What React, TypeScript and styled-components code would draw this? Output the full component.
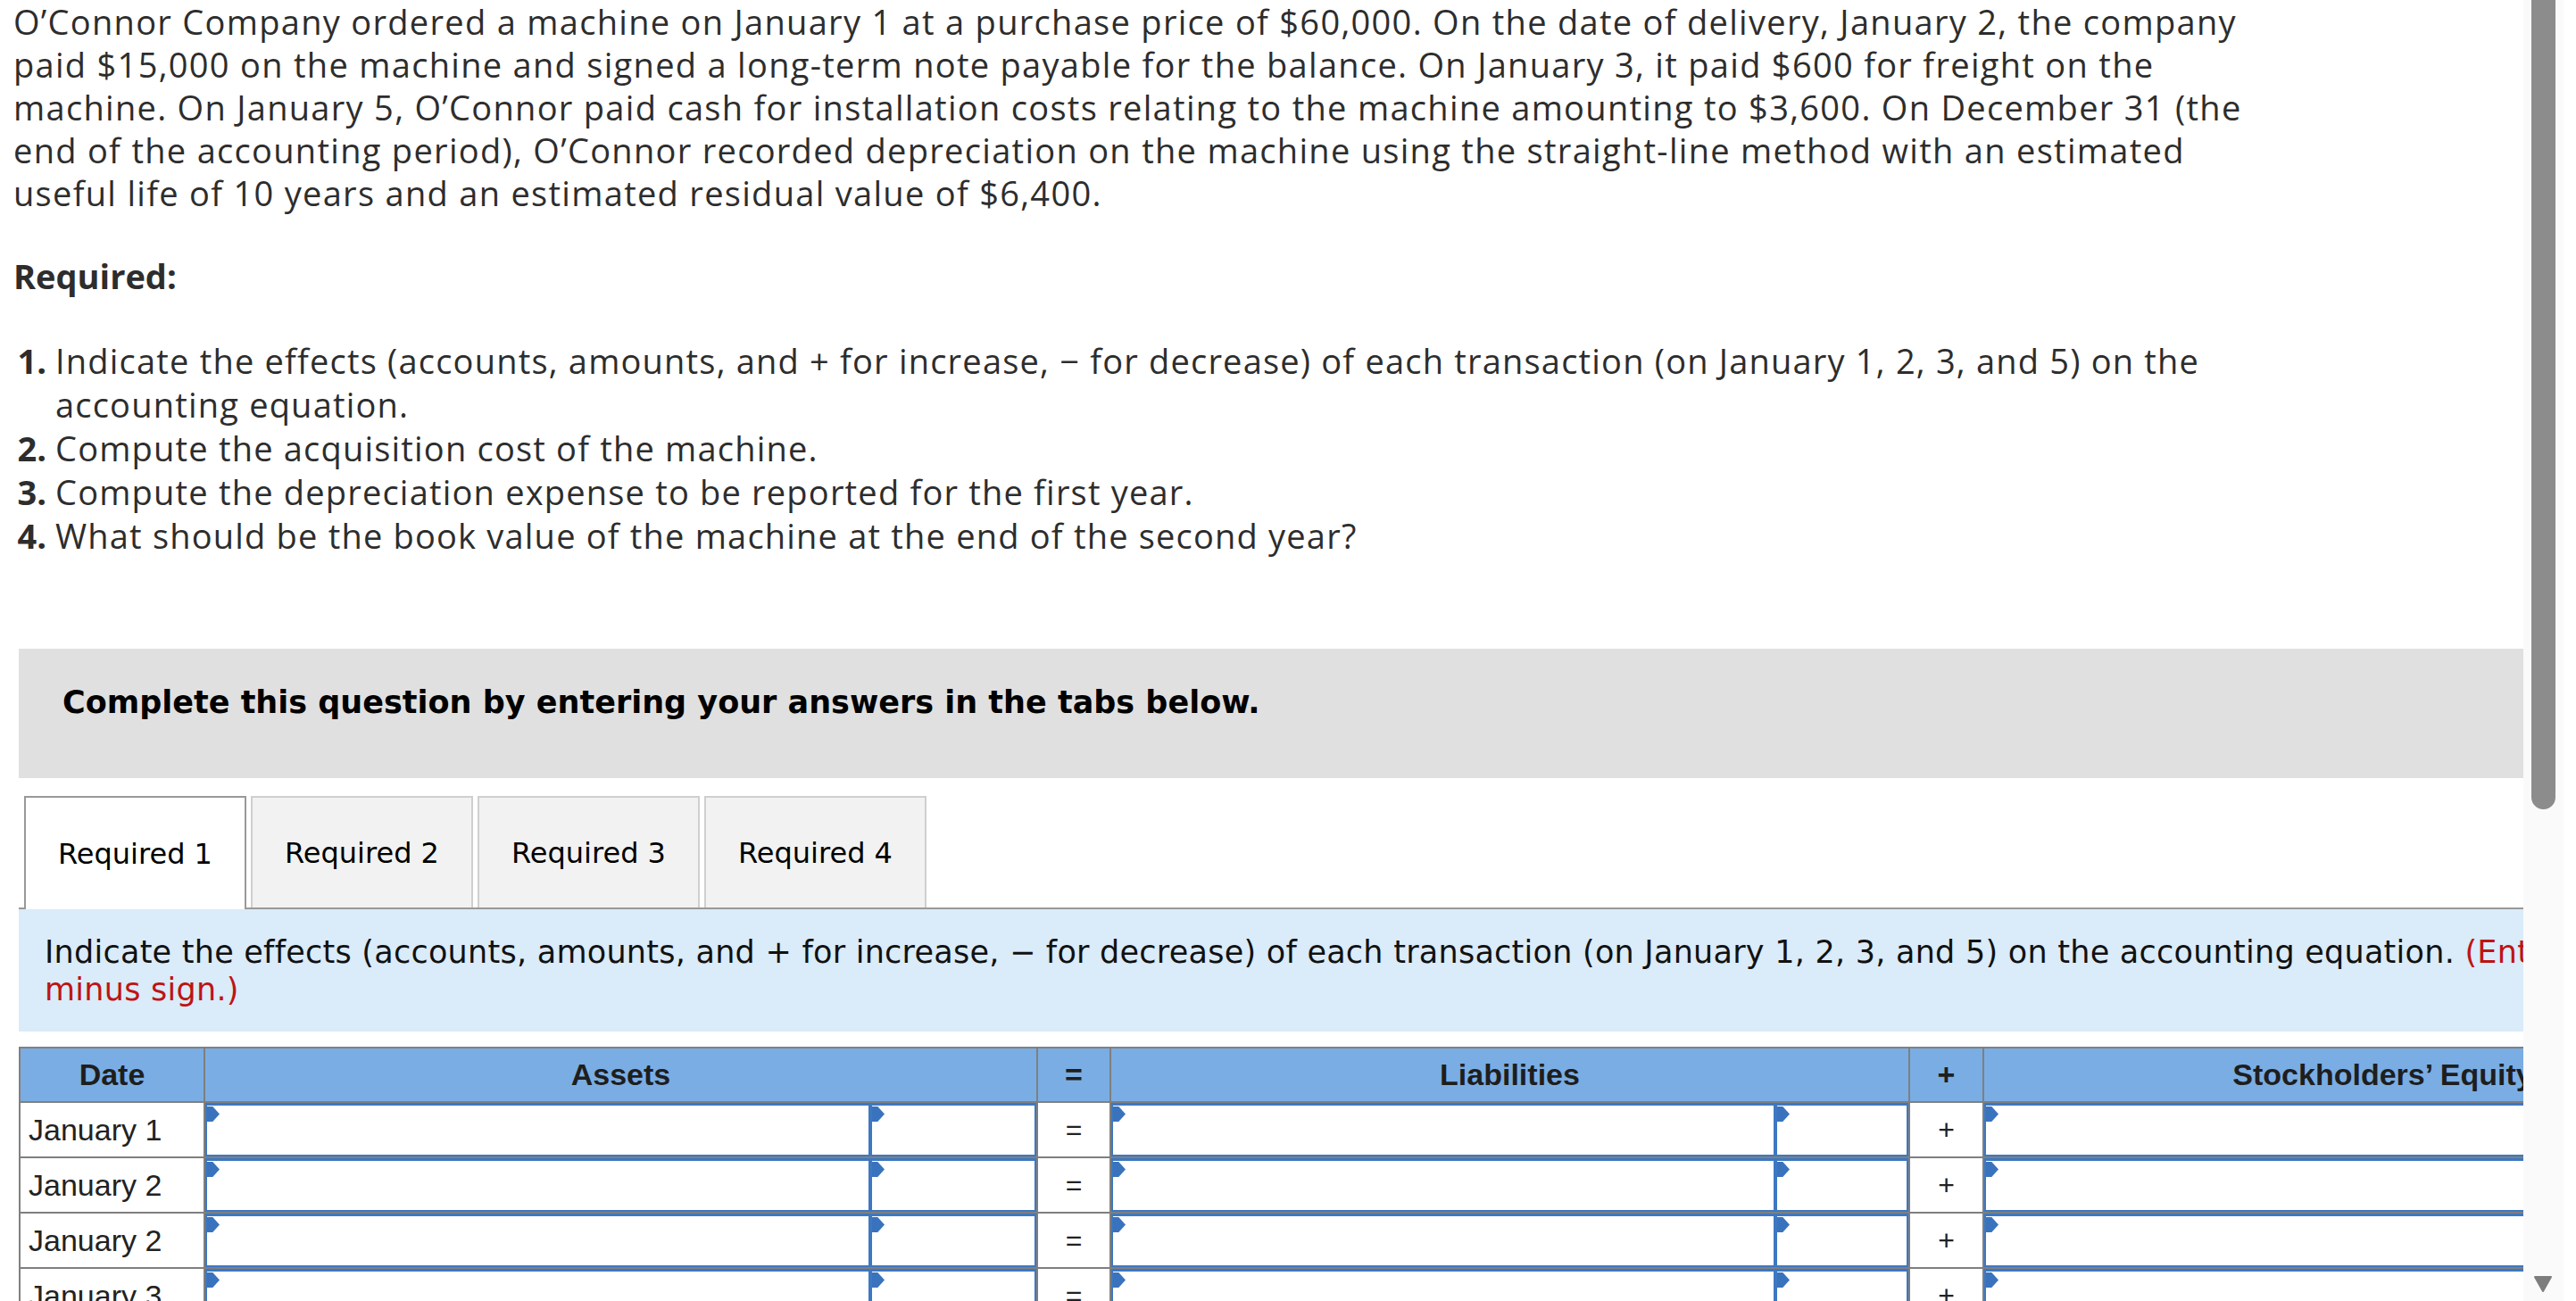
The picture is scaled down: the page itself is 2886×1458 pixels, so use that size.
import React from 'react';
import styled, { createGlobalStyle } from 'styled-components';

const GlobalStyle = createGlobalStyle`
  * { box-sizing: border-box; }
  html, body {
    margin: 0;
    padding: 0;
    background: #fff;
  }
  body {
    font-family: "Open Sans", "Liberation Sans", sans-serif;
    color: #2d2d2d;
  }
`;

// Page frame
const Page = styled.div`
  display: flex;
  width: 2886px;
  height: 1458px;
  overflow: hidden;
`;

const Main = styled.div`
  width: 2827px;
  flex: 0 0 2827px;
  height: 1458px;
  overflow: hidden;
`;

// Problem text
const Intro = styled.p`
  margin: 0;
  padding-left: 15px;
  font-size: 38px;
  line-height: 48px;
  letter-spacing: 1.3px;
  white-space: nowrap;
`;

const Line = styled.span`
  display: block;
`;

const Heading = styled.h3`
  margin: 45px 0 0;
  padding-left: 15px;
  font-size: 38px;
  line-height: 48px;
  font-weight: 700;
`;

const ReqList = styled.div`
  margin-top: 47px;
  padding-left: 15px;
  display: grid;
  grid-template-columns: 37px 1fr;
  column-gap: 10px;
  font-size: 38px;
  line-height: 49px;
`;

const Marker = styled.span`
  font-weight: 700;
  text-align: right;
`;

const ItemText = styled.span`
  white-space: nowrap;
  letter-spacing: 1.2px;
`;

const Banner = styled.div`
  margin: 102px 0 0 21px;
  height: 145px;
  padding: 39px 0 0 49px;
  background: #e0e0e0;
  font-family: "DejaVu Sans", Verdana, sans-serif;
  font-weight: 700;
  font-size: 35px;
  line-height: 42px;
  color: #000;
  white-space: nowrap;
`;

// Tabs + panel
const Panel = styled.div`
  margin: 20px 0 0 21px;
  width: 3900px;
`;

const TabBar = styled.div`
  display: flex;
  align-items: flex-end;
  gap: 5px;
  height: 127px;
  padding-left: 6px;
  border-bottom: 2px solid #999;
`;

const Tab = styled.div<{ $active?: boolean }>`
  width: 249px;
  height: ${p => (p.$active ? '127px' : '125px')};
  margin-bottom: ${p => (p.$active ? '-2px' : '0')};
  display: flex;
  align-items: center;
  justify-content: center;
  border: 2px solid ${p => (p.$active ? '#999' : '#cfcfcf')};
  border-bottom: none;
  background: ${p => (p.$active ? '#fff' : '#f2f2f2')};
  font-family: "DejaVu Sans", Verdana, sans-serif;
  font-size: 32px;
  color: #000;
`;

const Instruction = styled.div`
  padding: 27px 29px 26px;
  background: #daebf9;
  font-family: "DejaVu Sans", Verdana, sans-serif;
  font-size: 35px;
  letter-spacing: 0.25px;
  line-height: 42px;
  color: #111;
  white-space: nowrap;
`;

const Hint = styled.span`
  color: #bd1414;
`;

// Accounting equation table
const Table = styled.div`
  margin-top: 17px;
  width: fit-content;
  display: grid;
  grid-template-columns: 207px 745px 186px 84px 744px 149px 85px 744px 149px;
  border: 2px solid #808080;
  border-bottom: none;
  font-family: "Liberation Sans", Arial, sans-serif;
`;

const HeadCell = styled.div<{ $span?: number; $sides?: boolean; $right?: boolean }>`
  grid-column: span ${p => p.$span || 1};
  height: 61px;
  display: flex;
  align-items: center;
  justify-content: center;
  background: #7aade3;
  border-bottom: 2px solid #7f7f7f;
  border-left: ${p => (p.$sides ? '2px solid #7f7f7f' : 'none')};
  border-right: ${p => (p.$sides || p.$right ? '2px solid #7f7f7f' : 'none')};
  font-size: 34px;
  font-weight: 700;
  color: #1e1e1e;
  white-space: nowrap;
`;

const DateCell = styled.div`
  height: 62px;
  display: flex;
  align-items: center;
  padding-left: 9px;
  border-right: 2px solid #7f7f7f;
  border-bottom: 2px solid #7f7f7f;
  font-size: 34px;
  color: #222;
  white-space: nowrap;
`;

const SignCell = styled.div`
  height: 62px;
  display: flex;
  align-items: center;
  justify-content: center;
  border-left: 2px solid #7f7f7f;
  border-right: 2px solid #7f7f7f;
  border-bottom: 2px solid #7f7f7f;
  font-size: 32px;
  color: #222;
`;

const InputCell = styled.div`
  height: 62px;
  border-bottom: 2px solid #7f7f7f;
`;

const Field = styled.div`
  position: relative;
  height: 60px;
  background: #fff;
  border: 2px solid #3d78c1;
  border-top-width: 3px;
`;

const Flag = styled.span`
  position: absolute;
  top: 1px;
  left: 0;
  width: 14px;
  height: 17px;
  background: #3a73bd;
  clip-path: polygon(0 0, 45% 0, 100% 50%, 45% 100%, 0 100%);
`;

// Scrollbar
const Track = styled.div`
  flex: 0 0 45px;
  height: 1458px;
  background: #fafafa;
  display: flex;
  flex-direction: column;
  justify-content: space-between;
  padding-bottom: 10px;
`;

const Thumb = styled.div`
  margin-left: 9px;
  width: 27px;
  height: 907px;
  background: #8c8c8c;
  border-radius: 0 0 14px 14px;
`;

const ArrowWrap = styled.div`
  margin-left: 12px;
  width: 20px;
  height: 18px;
`;

const introLines = [
  'O’Connor Company ordered a machine on January 1 at a purchase price of $60,000. On the date of delivery, January 2, the company',
  'paid $15,000 on the machine and signed a long-term note payable for the balance. On January 3, it paid $600 for freight on the',
  'machine. On January 5, O’Connor paid cash for installation costs relating to the machine amounting to $3,600. On December 31 (the',
  'end of the accounting period), O’Connor recorded depreciation on the machine using the straight-line method with an estimated',
  'useful life of 10 years and an estimated residual value of $6,400.',
];

const requirements: [string, string[]][] = [
  ['1.', [
    'Indicate the effects (accounts, amounts, and + for increase, − for decrease) of each transaction (on January 1, 2, 3, and 5) on the',
    'accounting equation.',
  ]],
  ['2.', ['Compute the acquisition cost of the machine.']],
  ['3.', ['Compute the depreciation expense to be reported for the first year.']],
  ['4.', ['What should be the book value of the machine at the end of the second year?']],
];

const dates = ['January 1', 'January 2', 'January 2', 'January 3', 'January 5', 'December 31'];

const Input = () => (
  <InputCell>
    <Field>
      <Flag />
    </Field>
  </InputCell>
);

const App: React.FC = () => {
  return (
    <>
      <GlobalStyle />
      <Page>
        <Main>
          <Intro>
            {introLines.map((l, i) => (
              <Line key={i}>{l}</Line>
            ))}
          </Intro>
          <Heading>Required:</Heading>
          <ReqList>
            {requirements.map(([num, lines]) => (
              <React.Fragment key={num}>
                <Marker>{num}</Marker>
                <ItemText>
                  {lines.map((l, i) => (
                    <Line key={i}>{l}</Line>
                  ))}
                </ItemText>
              </React.Fragment>
            ))}
          </ReqList>

          <Banner>Complete this question by entering your answers in the tabs below.</Banner>

          <Panel>
            <TabBar>
              <Tab $active>Required 1</Tab>
              <Tab>Required 2</Tab>
              <Tab>Required 3</Tab>
              <Tab>Required 4</Tab>
            </TabBar>

            <Instruction>
              Indicate the effects (accounts, amounts, and + for increase, − for decrease) of each transaction (on January 1, 2, 3, and 5) on the accounting equation.{' '}
              <Hint>
                (Enter any decreases to account balances with a
                <br />
                minus sign.)
              </Hint>
            </Instruction>

            <Table>
              <HeadCell $right>Date</HeadCell>
              <HeadCell $span={2}>Assets</HeadCell>
              <HeadCell $sides>=</HeadCell>
              <HeadCell $span={2}>Liabilities</HeadCell>
              <HeadCell $sides>+</HeadCell>
              <HeadCell $span={2}>Stockholders’ Equity</HeadCell>

              {dates.map((d, i) => (
                <React.Fragment key={i}>
                  <DateCell>{d}</DateCell>
                  <Input />
                  <Input />
                  <SignCell>=</SignCell>
                  <Input />
                  <Input />
                  <SignCell>+</SignCell>
                  <Input />
                  <Input />
                </React.Fragment>
              ))}
            </Table>
          </Panel>
        </Main>

        <Track>
          <Thumb />
          <ArrowWrap>
            <svg width="20" height="18" viewBox="0 0 20 18">
              <path d="M1 1 H19 L10 17 Z" fill="#7d7d7d" stroke="#7d7d7d" strokeLinejoin="round" strokeWidth="2" />
            </svg>
          </ArrowWrap>
        </Track>
      </Page>
    </>
  );
};

export default App;
